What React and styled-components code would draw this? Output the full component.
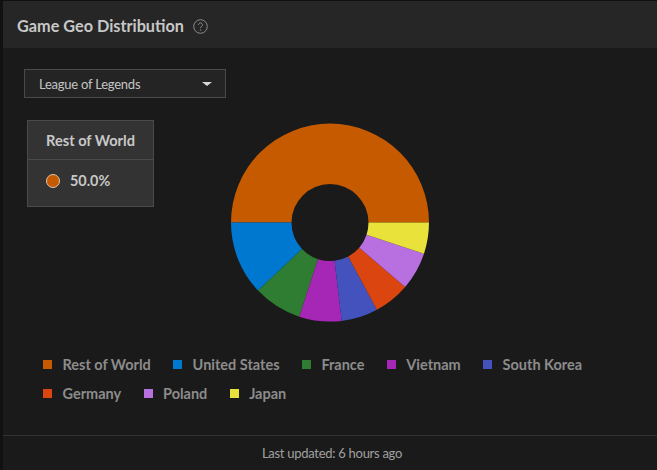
import React from "react";
import styled, { createGlobalStyle } from "styled-components";

const GlobalStyle = createGlobalStyle`
  html, body {
    margin: 0;
    padding: 0;
    background: #111111;
  }
  body {
    font-family: Lato, "Liberation Sans", sans-serif;
  }
`;

const Panel = styled.div`
  box-sizing: border-box;
  width: 654px;
  height: 469px;
  margin: 1px 0 0 3px;
  display: flex;
  flex-direction: column;
  background: #1a1a1a;
`;

const Header = styled.div`
  box-sizing: border-box;
  height: 47px;
  display: flex;
  align-items: center;
  gap: 9px;
  padding: 2px 0 0 14px;
  background: #262626;
`;

const Title = styled.h2`
  margin: 0;
  font-size: 16.25px;
  font-weight: 700;
  color: #c8c8c8;
`;

const Help = styled.svg`
  margin-top: 1px;
`;

const Body = styled.div`
  flex: 1;
  position: relative;
  padding: 21px 0 0 21px;
`;

const Select = styled.div`
  box-sizing: border-box;
  width: 202px;
  height: 29px;
  display: flex;
  align-items: center;
  justify-content: space-between;
  padding: 0 14px;
  border: 1px solid #4a4a4a;
  background: #242424;
  font-size: 13px;
  letter-spacing: -0.24px;
  color: #c4c4c4;
`;

const Caret = styled.span`
  width: 0;
  height: 0;
  border-left: 5px solid transparent;
  border-right: 5px solid transparent;
  border-top: 4px solid #d8d8d8;
  margin-right: -1px;
`;

const Tooltip = styled.div`
  position: absolute;
  left: 24px;
  top: 72px;
  box-sizing: border-box;
  width: 127px;
  height: 87px;
  border: 1px solid #4a4a4a;
  background: #333333;
`;

const TooltipTitle = styled.div`
  height: 38px;
  display: flex;
  align-items: center;
  justify-content: center;
  border-bottom: 1px solid #4a4a4a;
  font-size: 14.6px;
  font-weight: 700;
  color: #c8c8c8;
`;

const TooltipRow = styled.div`
  display: flex;
  align-items: center;
  gap: 10px;
  padding: 12px 0 0 18px;
  font-size: 14.4px;
  font-weight: 700;
  color: #c8c8c8;
`;

const Dot = styled.span`
  box-sizing: border-box;
  width: 14px;
  height: 14px;
  border-radius: 50%;
  border: 1px solid #e0c4a8;
  background: ${(p) => p.$color};
`;

const Chart = styled.svg`
  position: absolute;
  left: 225px;
  top: 72px;
`;

const Legend = styled.div`
  position: absolute;
  left: 40px;
  top: 307px;
  width: 570px;
  display: flex;
  flex-wrap: wrap;
  column-gap: 22.3px;
  row-gap: 11px;
`;

const LegendItem = styled.div`
  height: 18px;
  display: flex;
  align-items: center;
  gap: 10.5px;
  font-size: 14.5px;
  font-weight: 700;
  color: #8c8c8c;
`;

const Swatch = styled.span`
  width: 9px;
  height: 9px;
  background: ${(p) => p.$color};
`;

const Footer = styled.div`
  box-sizing: border-box;
  height: 35px;
  display: flex;
  align-items: center;
  justify-content: center;
  padding-left: 4px;
  border-top: 1px solid #333333;
  font-size: 13px;
  letter-spacing: -0.28px;
  color: #a0a0a0;
`;

const slices = [
  { name: "Rest of World", color: "#c65a00", from: 180, to: 360 },
  { name: "United States", color: "#0078d0", from: 136.6, to: 180 },
  { name: "France", color: "#2e7d32", from: 108.1, to: 136.6 },
  { name: "Vietnam", color: "#a626b5", from: 83.2, to: 108.1 },
  { name: "South Korea", color: "#4452bd", from: 61.7, to: 83.2 },
  { name: "Germany", color: "#da4510", from: 40.6, to: 61.7 },
  { name: "Poland", color: "#b86fe0", from: 18.3, to: 40.6 },
  { name: "Japan", color: "#e8e23a", from: 0, to: 18.3 },
];

const CX = 102;
const CY = 102.6;
const OUTER = 99;
const INNER = 38.5;

function point(r, deg) {
  const a = (deg * Math.PI) / 180;
  return `${(CX + r * Math.cos(a)).toFixed(2)} ${(CY + r * Math.sin(a)).toFixed(2)}`;
}

function slicePath(from, to) {
  const large = to - from > 180 ? 1 : 0;
  return [
    `M ${point(OUTER, from)}`,
    `A ${OUTER} ${OUTER} 0 ${large} 1 ${point(OUTER, to)}`,
    `L ${point(INNER, to)}`,
    `A ${INNER} ${INNER} 0 ${large} 0 ${point(INNER, from)}`,
    "Z",
  ].join(" ");
}

function HelpIcon() {
  return (
    <Help width="15" height="15" viewBox="0 0 15 15" fill="none">
      <circle cx="7.5" cy="7.5" r="6.8" stroke="#8a8a8a" strokeWidth="1" />
      <path
        d="M5.4 5.9c0-1.2 1-2 2.1-2s2.1.8 2.1 1.9c0 1.5-2.1 1.6-2.1 3.2"
        stroke="#8a8a8a"
        strokeWidth="1"
      />
      <circle cx="7.5" cy="11" r=".7" fill="#8a8a8a" />
    </Help>
  );
}

export default function App() {
  return (
    <>
      <GlobalStyle />
      <Panel>
        <Header>
          <Title>Game Geo Distribution</Title>
          <HelpIcon />
        </Header>
        <Body>
          <Select>
            League of Legends
            <Caret />
          </Select>
          <Tooltip>
            <TooltipTitle>Rest of World</TooltipTitle>
            <TooltipRow>
              <Dot $color="#c65a00" />
              50.0%
            </TooltipRow>
          </Tooltip>
          <Chart width="204" height="206" viewBox="0 0 204 206">
            {slices.map((s) => (
              <path key={s.name} d={slicePath(s.from, s.to)} fill={s.color} />
            ))}
          </Chart>
          <Legend>
            {slices.map((s) => (
              <LegendItem key={s.name}>
                <Swatch $color={s.color} />
                {s.name}
              </LegendItem>
            ))}
          </Legend>
        </Body>
        <Footer>Last updated: 6 hours ago</Footer>
      </Panel>
    </>
  );
}
